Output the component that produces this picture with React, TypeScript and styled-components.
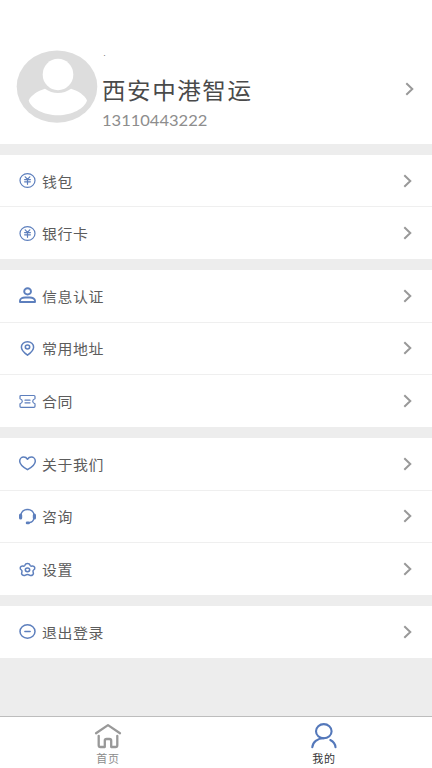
import React from 'react';
import styled, { createGlobalStyle } from 'styled-components';

const GlobalStyle = createGlobalStyle`
  * { box-sizing: border-box; }
  body { margin: 0; background: #ededed; }
`;

const Screen = styled.div`
  display: flex;
  flex-direction: column;
  width: 432px;
  height: 768px;
  overflow: hidden;
  background: #ededed;
  font-family: 'Noto Sans CJK SC', sans-serif;
  color: #555;
`;

const Profile = styled.header`
  display: flex;
  align-items: flex-start;
  height: 144.4px;
  padding: 50px 18px 0 16px;
  background: #fff;
`;

const Avatar = styled.svg`
  display: block;
  width: 82px;
  height: 74px;
  flex: none;
`;

const Identity = styled.div`
  display: flex;
  flex-direction: column;
  flex: 1;
  padding-left: 4px;
`;

const Status = styled.span`
  height: 22px;
  font-size: 5px;
  line-height: 9px;
  color: #777;
`;

const Name = styled.h1`
  margin: 0;
  font-size: 22.5px;
  font-weight: 400;
  line-height: 36px;
  letter-spacing: 1.5px;
  color: #4a4a4a;
  transform: translateY(-1px) scaleX(1.045);
  transform-origin: left;
`;

const Phone = styled.span`
  font-family: Lato, sans-serif;
  font-size: 15.5px;
  line-height: 24px;
  color: #8d8d8d;
  transform: scaleX(1.065);
  transform-origin: left;
`;

const ArrowSlot = styled.div`
  padding-top: 32px;
`;

const Groups = styled.main`
  display: flex;
  flex-direction: column;
  gap: 10.7px;
  padding-top: 10.4px;
  flex: 1;
`;

const Group = styled.section`
  background: #fff;
`;

const Row = styled.div`
  display: flex;
  align-items: center;
  height: 52.6px;
  padding: 0 20px 0 19px;
  border-bottom: 1px solid #efefef;
  &:last-child { border-bottom: 0; height: 52px; }
`;

const Label = styled.span`
  flex: 1;
  padding-left: 6px;
  font-size: 14.2px;
  line-height: 22px;
  letter-spacing: 0.6px;
  color: #5c5c5c;
  transform: translateY(-0.4px) scaleX(1.05);
  transform-origin: 6px center;
`;

const Glyph = styled.svg`
  display: block;
  flex: none;
  width: 17px;
  height: 17px;
  overflow: visible;
  fill: none;
  stroke: #5d7fbd;
  stroke-width: 1.5;
  stroke-linecap: round;
  stroke-linejoin: round;
`;

const ArrowIcon = styled.svg`
  display: block;
  width: 9px;
  height: 14px;
  flex: none;
  fill: none;
  stroke: #999;
  stroke-width: 2;
`;

const TabBar = styled.nav`
  display: flex;
  height: 52px;
  border-top: 1px solid #bdbdbd;
  background: #fff;
`;

const Tab = styled.div<{ $active?: boolean }>`
  display: flex;
  flex: 1;
  flex-direction: column;
  align-items: center;
  padding-top: 5px;
  font-size: 11px;
  line-height: 16px;
  letter-spacing: 0.7px;
  color: ${(p) => (p.$active ? '#333' : '#8b8b8b')};
`;

const TabIcon = styled.svg<{ $active?: boolean }>`
  display: block;
  width: 28px;
  height: 28px;
  fill: none;
  stroke: ${(p) => (p.$active ? '#5478ba' : '#999')};
  stroke-width: ${(p) => (p.$active ? 2.1 : 2.3)};
  stroke-linecap: round;
  stroke-linejoin: round;
`;

const Arrow = () => (
  <ArrowIcon viewBox="0 0 9 14"><path d="M1.3 1.2 7.3 7l-6 5.8" /></ArrowIcon>
);

type IconName = 'yuan' | 'person' | 'pin' | 'ticket' | 'heart' | 'headset' | 'gear' | 'exit';

const icons: Record<IconName, React.ReactNode> = {
  yuan: (
    <g strokeWidth="1.2">
      <ellipse cx="8.5" cy="8.5" rx="7.5" ry="6.9" />
      <path d="m6.200 4.800 2.300 2.600 2.300-2.600M5.600 7.600h5.800M5.600 9.800h5.800M8.500 7.600v4.700" />
    </g>
  ),
  person: (
    <g strokeWidth="1.9">
      <ellipse cx="8.6" cy="4.4" rx="3.4" ry="3.100" />
      <path d="M1 15v-1.200c0-2.100 2.500-3.300 5.100-3.300h4.800c2.600 0 5.100 1.200 5.100 3.300V15Z" />
    </g>
  ),
  pin: (
    <g>
      <path d="M8.5 15.200C5.3 12.800 2.400 10.300 2.400 7.200c0-3.100 2.700-5.500 6.100-5.500s6.100 2.400 6.100 5.500c0 3.100-2.900 5.600-6.100 8Z" />
      <ellipse cx="8.500" cy="7" rx="2.200" ry="1.900" />
    </g>
  ),
  ticket: (
    <g strokeWidth="1.2">
      <path d="M2 2.500h13q1 0 1 1v2.300c-1.500.5-2.300 1.200-2.300 2.500s.8 2 2.300 2.500v2.500q0 1-1 1H2q-1 0-1-1v-2.500c1.500-.5 2.300-1.200 2.300-2.500S2.500 6.300 1 5.800V3.500q0-1 1-1ZM6 7.200h5M6 9.800h5" />
    </g>
  ),
  heart: <path d="M8.500 14.700C5.100 12.700.7 9.800.7 6.200c0-2.400 1.800-4.100 4-4.100 1.600 0 2.900.8 3.800 2.100.9-1.300 2.200-2.100 3.800-2.100 2.200 0 4 1.700 4 4.100 0 3.600-4.400 6.500-7.800 8.500Z" />,
  headset: (
    <g strokeWidth="1.300">
      <path d="M1.800 7C2.500 3.600 5.200 1.500 8.500 1.500S14.500 3.600 15.200 7M14.900 10.500c-.6 2.500-2.400 4-4.700 4.200" />
      <path d="M1.600 7.200v2.700M15.400 7.200v2.700" strokeWidth="3.200" />
      <path d="M8.100 14.900h1.500" strokeWidth="2.700" />
    </g>
  ),
  gear: (
    <g strokeWidth="1.500" transform="translate(0 .8)">
      <path d="M5.900 3.500Q6.500 1.600 8.500 1.600t2.600 1.900q.4 1.100 1.900.8 2-.2 2.700 1.300.5 1.500-1.100 2.600-1 .7-.5 1.900.8 2-.4 3-1.500 1.200-3.200.2Q8.500 12.200 6.500 13.300q-1.700 1-3.200-.2-1.200-1-.4-3Q3.400 8.900 2.400 8.200.8 7.100 1.300 5.600 2 4.100 4 4.300q1.500.3 1.900-.8Z" />
      <ellipse cx="8.500" cy="8" rx="2.200" ry="1.900" />
    </g>
  ),
  exit: (
    <g>
      <ellipse cx="8.500" cy="8.500" rx="7.500" ry="6.700" />
      <path d="M5.900 8.500h5.200" />
    </g>
  ),
};

const groups: { icon: IconName; label: string }[][] = [
  [
    { icon: 'yuan', label: '钱包' },
    { icon: 'yuan', label: '银行卡' },
  ],
  [
    { icon: 'person', label: '信息认证' },
    { icon: 'pin', label: '常用地址' },
    { icon: 'ticket', label: '合同' },
  ],
  [
    { icon: 'heart', label: '关于我们' },
    { icon: 'headset', label: '咨询' },
    { icon: 'gear', label: '设置' },
  ],
  [{ icon: 'exit', label: '退出登录' }],
];

export default function App() {
  return (
    <>
      <GlobalStyle />
      <Screen>
        <Profile>
          <Avatar viewBox="0 0 82 74">
            <ellipse cx="41" cy="36.600" rx="40.300" ry="36.200" fill="#ddd" />
            <ellipse cx="42" cy="24.500" rx="15.300" ry="15.700" fill="#fff" />
            <path d="M29 38.800c7.500 5.700 18.500 5.700 26 0C62.500 41 69 45.500 71 50.500 68.500 58.500 56 65.300 42 65.300S15 58.500 12.700 50.500C15 45.500 21.500 41 29 38.800Z" fill="#fff" />
          </Avatar>
          <Identity>
            <Status>·</Status>
            <Name>西安中港智运</Name>
            <Phone>13110443222</Phone>
          </Identity>
          <ArrowSlot><Arrow /></ArrowSlot>
        </Profile>
        <Groups>
          {groups.map((rows, i) => (
            <Group key={i}>
              {rows.map((row) => (
                <Row key={row.label}>
                  <Glyph viewBox="0 0 17 17">{icons[row.icon]}</Glyph>
                  <Label>{row.label}</Label>
                  <Arrow />
                </Row>
              ))}
            </Group>
          ))}
        </Groups>
        <TabBar>
          <Tab>
            <TabIcon viewBox="0 0 28 28">
              <path d="M2 11.200 14 3.100l12 8.100M4.700 13.800v9.500q0 1.700 1.700 1.700h4.400v-6.300q0-1.700 1.700-1.700h3q1.700 0 1.700 1.700V25h4.400q1.700 0 1.700-1.700v-9.500" />
            </TabIcon>
            首页
          </Tab>
          <Tab $active>
            <TabIcon $active viewBox="0 0 28 28">
              <ellipse cx="13.800" cy="9.200" rx="7.800" ry="7.100" />
              <path d="M2.300 25.300c.3-5.300 5-9 11.500-9M20.300 18c3.200 1.600 5 4.200 5.200 7.300" />
            </TabIcon>
            我的
          </Tab>
        </TabBar>
      </Screen>
    </>
  );
}
